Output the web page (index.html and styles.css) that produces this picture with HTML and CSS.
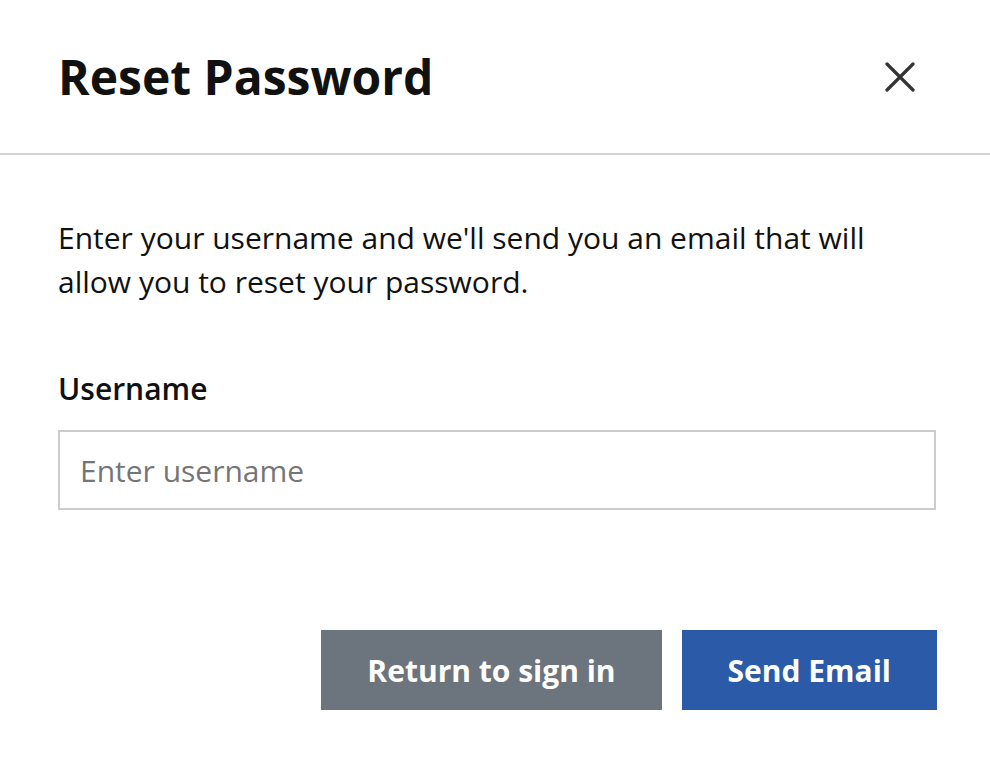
FILE: index.html
```html
<!DOCTYPE html>
<html lang="en">
<head>
<meta charset="utf-8">
<title>Reset Password</title>
<link rel="stylesheet" href="styles.css">
</head>
<body>
<div class="modal">
  <header class="modal-header">
    <h1 class="modal-title">Reset Password</h1>
    <button class="close-btn" type="button" aria-label="Close">
      <svg width="30" height="30" viewBox="0 0 30 30" aria-hidden="true">
        <path d="M2 2 L28 28 M28 2 L2 28" stroke="#333" stroke-width="3.2" stroke-linecap="round" fill="none"/>
      </svg>
    </button>
  </header>
  <main class="modal-body">
    <p class="intro">Enter your username and we'll send you an email that will allow you to reset your password.</p>
    <label class="field-label" for="username">Username</label>
    <input class="field-input" id="username" type="text" placeholder="Enter username">
    <div class="actions">
      <button class="btn btn-secondary" type="button">Return to sign in</button>
      <button class="btn btn-primary" type="button">Send Email</button>
    </div>
  </main>
</div>
</body>
</html>
```
FILE: styles.css
```css
* { box-sizing: border-box; }
html, body {
  margin: 0;
  padding: 0;
  background: #fff;
}
body {
  font-family: "Open Sans", "Noto Sans", sans-serif;
  color: #111;
}
.modal {
  width: 990px;
  height: 766px;
}
.modal-header {
  height: 155px;
  border-bottom: 2px solid #d1d1d1;
  display: flex;
  align-items: center;
  justify-content: space-between;
  padding: 0 75px 0 58px;
}
.modal-title {
  margin: 0;
  font-size: 48px;
  font-weight: 700;
  color: #111;
  line-height: 1;
}
.close-btn {
  border: 0;
  background: none;
  padding: 0;
  width: 30px;
  height: 30px;
  cursor: pointer;
  display: flex;
}
.modal-body {
  padding: 61px 53px 0 58px;
  display: flex;
  flex-direction: column;
}
.intro {
  margin: 0;
  font-size: 30px;
  line-height: 44px;
  color: #111;
  max-width: 840px;
}
.field-label {
  margin-top: 65px;
  font-size: 30px;
  font-weight: 600;
  line-height: 40px;
}
.field-input {
  margin-top: 21px;
  margin-right: 1px;
  height: 80px;
  border: 2px solid #ccc;
  border-radius: 0;
  padding: 0 20px;
  font-family: inherit;
  font-size: 30px;
  color: #111;
  outline: none;
}
.field-input::placeholder { color: #757575; }
.actions {
  margin-top: 120px;
  display: flex;
  justify-content: flex-end;
  gap: 20px;
}
.btn {
  height: 80px;
  border: 0;
  border-radius: 0;
  font-family: inherit;
  font-size: 30px;
  font-weight: 700;
  color: #fff;
  padding: 0 46px;
  cursor: pointer;
}
.btn-secondary { background: #6c757d; }
.btn-primary { background: #2a5aa8; }
```
